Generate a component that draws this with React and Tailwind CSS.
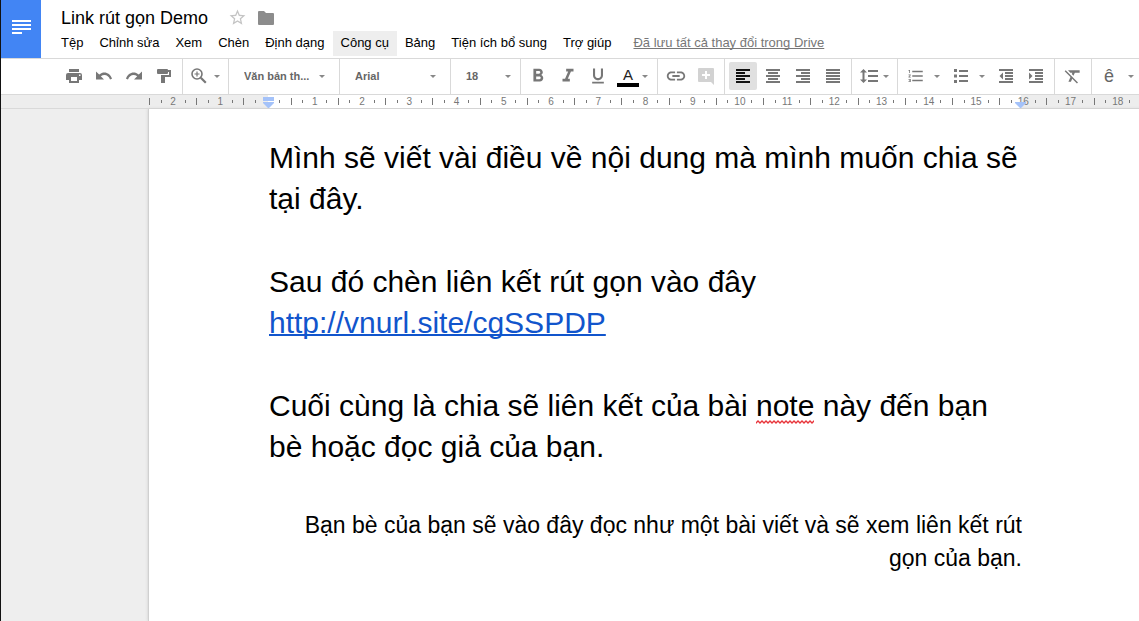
import clsx from 'clsx'
import {
  MdFormatBold, MdFormatItalic, MdFormatUnderlined, MdInsertLink,
  MdFormatListNumbered, MdFormatClear, MdStarBorder,
} from 'react-icons/md'

const menus = ['Tệp', 'Chỉnh sửa', 'Xem', 'Chèn', 'Định dạng', 'Công cụ', 'Bảng', 'Tiện ích bổ sung', 'Trợ giúp']

// one cell per centimetre, counted outwards from the left margin
const rulerCells = Array.from({ length: 21 }, (_, i) => i - 2)

// 18px grid
const paths = {
  print: 'M4 2h10v3H4zM3 6h12a2 2 0 0 1 2 2v5h-3v3H4v-3H1V8a2 2 0 0 1 2-2zM6 10v4h6v-4zM14 7.500v1.500h1.500V7.500z',
  undo: 'M1 4.500v8h8l-3.200-3.200c3.600-2.600 7.700-1.200 9.200 3.200l2-.8C15 5.800 9 3.600 4.200 7.600z',
  redo: 'M17 4.500v8H9l3.200-3.200C8.600 6.700 4.500 8.100 3 12.500l-2-.8C3 5.800 9 3.600 13.800 7.600z',
  paint: 'M3 2h9a1 1 0 0 1 1 1h3v7h-6v6H6V8h8V5h-1v1a1 1 0 0 1-1 1H3a1 1 0 0 1-1-1V3a1 1 0 0 1 1-1z',
  left: 'M2 2h14v2H2zM2 5h9v2H2zM2 8h14v2H2zM2 11h9v2H2zM2 14h14v2H2z',
  center: 'M2 2h14v2H2zM4 5h10v2H4zM2 8h14v2H2zM4 11h10v2H4zM2 14h14v2H2z',
  right: 'M2 2h14v2H2zM7 5h9v2H7zM2 8h14v2H2zM7 11h9v2H7zM2 14h14v2H2z',
  justify: 'M2 2h14v2H2zM2 5h14v2H2zM2 8h14v2H2zM2 11h14v2H2zM2 14h14v2H2z',
  spacing: 'M3.500 2L7 5.500H4.500v7H7L3.500 16 0 12.500h2.500v-7H0zM8 3h10v2H8zM8 8h10v2H8zM8 13h10v2H8z',
  bullets: 'M2 2h3v3H2zM2 7.500h3v3H2zM2 13h3v3H2zM7 3h9v2H7zM7 8h9v2H7zM7 13h9v2H7z',
  outdent: 'M2 2h14v2H2zM8 5h8v2H8zM8 8h8v2H8zM8 11h8v2H8zM2 14h14v2H2zM6 5.500v7L2.500 9z',
  indent: 'M2 2h14v2H2zM8 5h8v2H8zM8 8h8v2H8zM8 11h8v2H8zM2 14h14v2H2zM2 5.500v7L5.500 9z',
}

function Glyph({ name }) {
  return (
    <svg viewBox="0 0 18 18" className="w-[18px] h-[18px] shrink-0 fill-current">
      <path fillRule={name === 'print' ? 'evenodd' : 'nonzero'} d={paths[name]} />
    </svg>
  )
}

function Caret({ className }) {
  return (
    <svg viewBox="0 0 6 3" className={clsx('w-[6px] h-[3px] shrink-0 fill-[#888]', className)}>
      <path d="M0 0h6L3 3z" />
    </svg>
  )
}

function Group({ children, className }) {
  return <div className={clsx('flex items-center shrink-0 pb-px border-r border-[#d9d9d9]', className)}>{children}</div>
}

function IconButton({ label, active, children }) {
  return (
    <button aria-label={label} className="w-[30px] h-[30px] p-px shrink-0">
      <span className={clsx('flex items-center justify-center w-full h-full rounded-xs', active ? 'bg-[#e0e0e0] text-[#111]' : 'text-[#777]')}>
        {children}
      </span>
    </button>
  )
}

function ToolbarSelect({ label, value, className, caretClass = 'right-[14px]' }) {
  return (
    <label className={clsx('relative flex items-center h-full', className)}>
      <select aria-label={label} className="appearance-none w-full h-full pl-[15px] pr-5 text-[11px] font-bold text-[#666] outline-none">
        <option>{value}</option>
      </select>
      <Caret className={clsx('absolute pointer-events-none', caretClass)} />
    </label>
  )
}

function Header() {
  return (
    <header className="flex h-[58px]">
      <a href="#" aria-label="Docs" className="w-10 shrink-0 bg-[#4285f4] pl-[11px]">
        <svg viewBox="0 0 20 14" className="w-5 h-[14px] mt-5 fill-white">
          <path d="M0 0h19v2H0zM0 4h19v2H0zM0 8h19v2H0zM0 12h10v2H0z" />
        </svg>
      </a>
      <div className="pl-3 min-w-0">
        <div className="flex items-center h-[31px] pt-1 pl-2">
          <h1 className="text-[18px] leading-6 text-black whitespace-nowrap">Link rút gọn Demo</h1>
          <button aria-label="Gắn dấu sao" className="ml-5 text-[#c4c4c4]"><MdStarBorder size={19} /></button>
          <button aria-label="Thư mục" className="ml-[11px]">
            <svg viewBox="0 0 16 14" className="w-4 h-[14px] fill-[#8c8c8c]">
              <path d="M1 0h5l2 2h7a1 1 0 0 1 1 1v10a1 1 0 0 1-1 1H1a1 1 0 0 1-1-1V1a1 1 0 0 1 1-1z" />
            </svg>
          </button>
        </div>
        <nav className="flex items-center text-[13px] whitespace-nowrap">
          {menus.map(m => (
            <button key={m} className={clsx('h-[25px] px-2 pb-[2px] text-black', m === 'Công cụ' && 'bg-[#eee]')}>
              {m}
            </button>
          ))}
          <a href="#" className="ml-[14px] pb-[2px] text-[#777] underline [text-decoration-skip-ink:none]">Đã lưu tất cả thay đổi trong Drive</a>
        </nav>
      </div>
    </header>
  )
}

function Toolbar() {
  return (
    <div className="flex h-[37px] border-y border-[#d9d9d9] overflow-hidden">
      <Group className="pl-[58px] pr-[3px]">
        <IconButton label="In"><Glyph name="print" /></IconButton>
        <IconButton label="Hoàn tác"><Glyph name="undo" /></IconButton>
        <IconButton label="Làm lại"><Glyph name="redo" /></IconButton>
        <IconButton label="Sao chép định dạng"><Glyph name="paint" /></IconButton>
      </Group>
      <Group>
        <button aria-label="Thu phóng" className="flex items-center gap-[6px] pl-[7px] pr-2 text-[#777]">
          <svg viewBox="0 0 18 18" className="w-[18px] h-[18px] fill-none stroke-current">
            <circle cx="7" cy="7" r="5" strokeWidth="1.600" />
            <path d="M7 4.500v5M4.500 7h5" strokeWidth="1.200" />
            <path d="M10.800 10.800l5 5" strokeWidth="2.200" />
          </svg>
          <Caret />
        </button>
      </Group>
      <Group><ToolbarSelect label="Kiểu" value="Văn bản th..." className="w-[110px]" /></Group>
      <Group><ToolbarSelect label="Phông chữ" value="Arial" className="w-[110px]" /></Group>
      <Group><ToolbarSelect label="Cỡ chữ" value="18" className="w-[69px]" caretClass="right-[9px]" /></Group>
      <Group className="pl-[2px]">
        <IconButton label="Đậm"><MdFormatBold size={22} /></IconButton>
        <IconButton label="Nghiêng"><MdFormatItalic size={22} /></IconButton>
        <IconButton label="Gạch chân"><MdFormatUnderlined size={20} /></IconButton>
        <button aria-label="Màu văn bản" className="flex items-center gap-[3px] pl-1 pr-[9px]">
          <span className="w-[22px] border-b-4 border-black text-[15px] leading-[16px] text-center text-[#222] mt-[2px]">A</span>
          <Caret />
        </button>
      </Group>
      <Group className="px-[3px]">
        <IconButton label="Liên kết"><MdInsertLink size={22} /></IconButton>
        <IconButton label="Nhận xét">
          <svg viewBox="0 0 16 17" className="w-4 h-[17px]">
            <path d="M1 0h14a1 1 0 0 1 1 1v16l-3-3H1a1 1 0 0 1-1-1V1a1 1 0 0 1 1-1z" fill="#d2d2d2" />
            <path d="M7 3h2v3h3v2H9v3H7V8H4V6h3z" fill="#fff" />
          </svg>
        </IconButton>
      </Group>
      <Group className="px-[3px]">
        <IconButton label="Căn trái" active><Glyph name="left" /></IconButton>
        <IconButton label="Căn giữa"><Glyph name="center" /></IconButton>
        <IconButton label="Căn phải"><Glyph name="right" /></IconButton>
        <IconButton label="Căn đều"><Glyph name="justify" /></IconButton>
      </Group>
      <Group>
        <button aria-label="Giãn dòng" className="flex items-center gap-[5px] px-2 text-[#777]">
          <Glyph name="spacing" />
          <Caret />
        </button>
      </Group>
      <Group className="pr-[3px]">
        <button aria-label="Danh sách đánh số" className="flex items-center gap-[9px] pl-[9px] pr-[3px] text-[#777]">
          <MdFormatListNumbered size={18} />
          <Caret />
        </button>
        <button aria-label="Danh sách dấu đầu dòng" className="flex items-center gap-[9px] pl-[9px] pr-[6px] text-[#777]">
          <Glyph name="bullets" />
          <Caret />
        </button>
        <IconButton label="Giảm thụt lề"><Glyph name="outdent" /></IconButton>
        <IconButton label="Tăng thụt lề"><Glyph name="indent" /></IconButton>
      </Group>
      <Group className="px-[3px]">
        <IconButton label="Xóa định dạng"><MdFormatClear size={20} /></IconButton>
      </Group>
      <button aria-label="Công cụ nhập" className="flex items-center gap-[14px] pl-3 pb-px shrink-0 text-[18px] text-[#666]">
        ê
        <Caret />
      </button>
    </div>
  )
}

function Ruler() {
  return (
    <div className="h-[14px] bg-[#ededed] border-b border-[#d9d9d9] overflow-hidden">
      <div className="relative ml-[148px] w-[992px] h-full">
        <div className="absolute inset-y-0 left-[119px] right-[120px] bg-white" />
        <div className="relative flex h-full text-[10px] leading-[13px] text-[#777]">
          {rulerCells.map(n => (
            <div key={n} className="flex-1 flex justify-between items-center">
              <span className="w-0"><i className="block w-px h-[7px] bg-[#777]" /></span>
              <span className="w-0"><i className="block w-px h-[3px] bg-[#777]" /></span>
              <span className="w-0 pl-px flex justify-center">{n !== 0 && Math.abs(n)}</span>
              <span className="w-0"><i className="block w-px h-[3px] bg-[#777]" /></span>
              <span className="w-0" />
            </div>
          ))}
        </div>
        <svg viewBox="0 0 11 11" className="absolute left-[114px] top-[2px] w-[11px] h-[11px] fill-[#a4c2f9]">
          <path d="M0 0h11v4H0zM0 5h11v1L6 11H5L0 6z" />
        </svg>
        <svg viewBox="0 0 11 6" className="absolute right-[115px] top-[7px] w-[11px] h-[6px] fill-[#a4c2f9]">
          <path d="M0 0h11v1L6 6H5L0 1z" />
        </svg>
      </div>
    </div>
  )
}

function Misspelled({ children }) {
  return (
    <span className="relative">
      {children}
      <svg className="absolute left-0 -bottom-0.5 w-full h-1">
        <defs>
          <pattern id="squiggle" width="4" height="4" patternUnits="userSpaceOnUse">
            <path d="M-1 4L2 1l3 3" fill="none" stroke="#e8343a" strokeWidth="1.300" />
          </pattern>
        </defs>
        <rect width="100%" height="4" fill="url(#squiggle)" />
      </svg>
    </span>
  )
}

export default function App() {
  return (
    <div className="min-h-screen flex flex-col overflow-hidden bg-white border-l border-[#111] font-['Liberation_Sans',Arial,sans-serif]">
      <Header />
      <Toolbar />
      <Ruler />
      <main className="flex-1 flex bg-[#eee]">
        <article className="ml-[147px] w-[994px] shrink-0 bg-white border-l border-[#d0d0d0] px-[120px] pt-[28px] text-[30px] leading-[41px] text-black shadow-[0_0_3px_#ccc]">
          <p className="mb-[42px]">Mình sẽ viết vài điều về nội dung mà mình muốn chia sẽ tại đây.</p>
          <p className="mb-[42px]">
            Sau đó chèn liên kết rút gọn vào đây<br />
            <a href="#" className="text-[#1155cc] underline decoration-2 [text-decoration-skip-ink:none]">http://vnurl.site/cgSSPDP</a>
          </p>
          <p className="mb-[42px]">
            Cuối cùng là chia sẽ liên kết của bài <Misspelled>note</Misspelled> này đến bạn<br />
            bè hoặc đọc giả của bạn.
          </p>
          <p className="text-[23px] leading-[33px] text-right">
            Bạn bè của bạn sẽ vào đây đọc như một bài viết và sẽ xem liên kết rút<br />
            gọn của bạn.
          </p>
        </article>
      </main>
    </div>
  )
}
